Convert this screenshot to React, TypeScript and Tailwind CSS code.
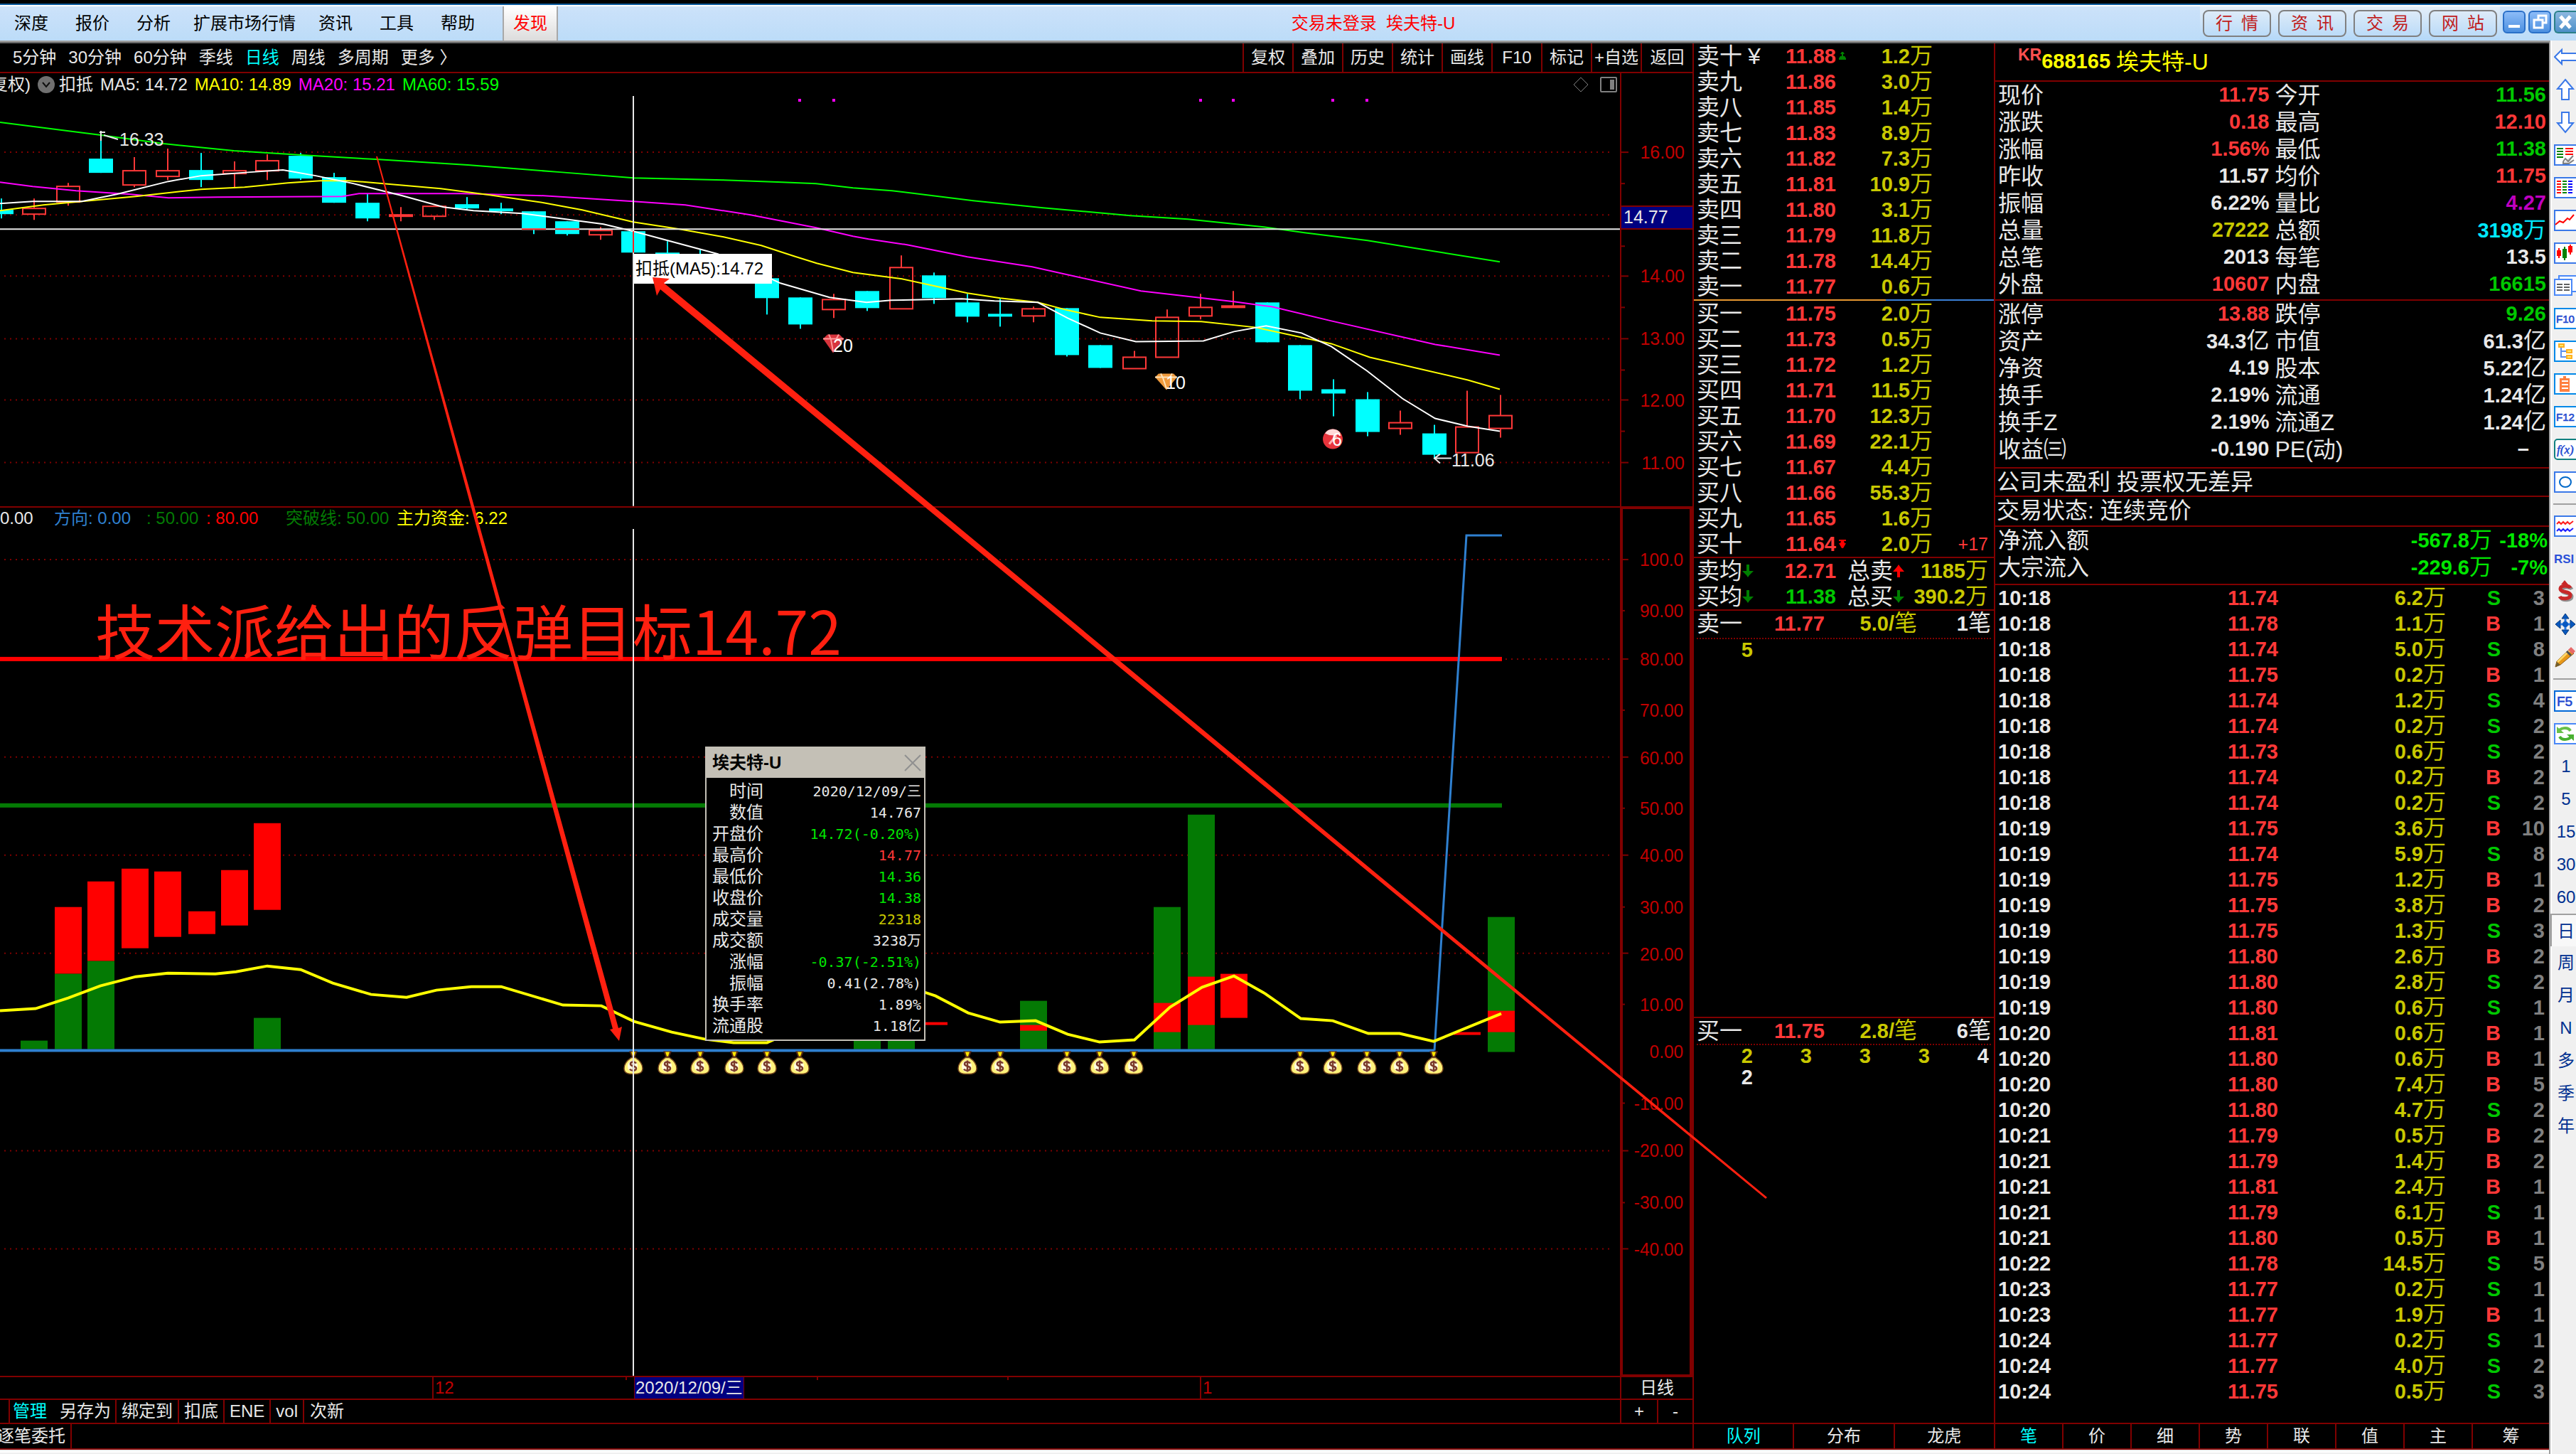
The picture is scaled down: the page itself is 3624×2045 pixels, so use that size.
import type { ReactNode } from 'react';

const WHITE = '#e8e8e8';
const DARK_RED = '#800000';

/* ---------- chart data ---------- */

// x, body top, body bottom, high, low, rising
type Candle = [number, number, number, number, number, boolean];
const candles: Candle[] = [
  [2, 295, 301, 279, 307, false],
  [48, 293, 301, 279, 309, true],
  [96, 262, 284, 257, 289, true],
  [142, 223, 243, 190, 243, false],
  [189, 240, 260, 221, 263, true],
  [236, 240, 248, 209, 253, true],
  [283, 239, 253, 215, 263, false],
  [330, 240, 244, 227, 263, true],
  [376, 226, 240, 217, 253, true],
  [423, 219, 251, 215, 253, false],
  [470, 249, 285, 243, 285, false],
  [517, 285, 307, 273, 311, false],
  [564, 302, 304, 291, 311, true],
  [611, 290, 304, 290, 309, true],
  [657, 287, 293, 277, 295, false],
  [705, 293, 297, 285, 301, false],
  [751, 297, 323, 297, 329, false],
  [798, 311, 329, 311, 331, false],
  [845, 324, 330, 319, 337, true],
  [891, 325, 355, 325, 359, false],
  [939, 355, 385, 339, 390, false],
  [985, 362, 390, 350, 395, false],
  [1032, 370, 392, 362, 396, false],
  [1079, 391, 419, 391, 442, false],
  [1126, 418, 456, 418, 462, false],
  [1173, 421, 435, 413, 447, true],
  [1220, 409, 433, 409, 437, false],
  [1268, 376, 434, 359, 434, true],
  [1314, 387, 419, 383, 427, false],
  [1361, 425, 445, 413, 453, false],
  [1407, 441, 445, 420, 459, false],
  [1454, 434, 444, 431, 453, true],
  [1501, 433, 499, 433, 501, false],
  [1548, 485, 517, 485, 517, false],
  [1596, 502, 518, 493, 518, true],
  [1642, 446, 502, 435, 502, true],
  [1689, 432, 444, 413, 449, true],
  [1735, 430, 432, 409, 432, true],
  [1783, 425, 481, 425, 481, false],
  [1829, 485, 549, 485, 561, false],
  [1876, 547, 553, 533, 585, false],
  [1924, 561, 607, 551, 613, false],
  [1970, 594, 602, 577, 611, true],
  [2018, 609, 639, 597, 645, false],
  [2064, 600, 636, 549, 636, true],
  [2111, 584, 602, 555, 615, true],
];

const ma60 =
  '0,172 142,190 230,202 329,212 424,218 529,224 658,232 788,242 891,250 1018,253 1100,256 1148,258 1200,264 1255,268 1369,282 1467,292 1590,303 1671,308 1778,319 1835,327 1924,338 1998,350 2110,368';
const ma20 =
  '0,256 46,262 107,268 184,273 237,278 306,277 482,276 505,272 650,272 765,275 891,283 964,288 1056,302 1148,320 1200,332 1222,336 1276,344 1361,361 1452,375 1605,409 1736,424 1789,431 1873,451 2019,484 2110,499';
const ma10 =
  '0,296 61,288 115,283 191,276 283,266 344,263 405,257 451,254 490,254 551,259 620,265 689,274 765,285 819,295 891,312 956,322 1018,333 1071,345 1117,360 1149,370 1200,383 1269,392 1315,402 1361,412 1407,419 1460,425 1502,436 1548,446 1621,451 1690,452 1766,460 1873,483 1927,502 1996,518 2065,534 2110,547';
const ma5 =
  '0,286 46,283 115,283 164,273 237,255 283,247 352,242 398,239 444,247 497,258 566,275 624,291 666,296 735,300 796,308 849,315 891,325 1010,357 1098,398 1167,418 1219,425 1254,422 1353,420 1399,423 1460,425 1502,447 1548,468 1598,480 1693,479 1736,466 1781,458 1831,468 1873,487 1923,521 1973,560 2019,588 2065,599 2110,606';

const fund =
  '0,1421 50,1418 96,1403 141,1386 191,1373 236,1368 303,1369 332,1366 376,1358 423,1363 468,1382 522,1398 572,1402 614,1392 663,1387 705,1387 792,1413 846,1414 892,1436 945,1451 992,1461 1032,1466 1079,1466 1170,1425 1240,1396 1301,1395 1316,1400 1362,1424 1407,1437 1457,1435 1502,1454 1547,1465 1596,1462 1646,1416 1691,1388 1736,1372 1780,1397 1830,1432 1875,1435 1925,1453 1969,1453 2017,1464 2112,1425';

// x, top, bottom, colour
const bars: [number, number, number, string][] = [
  [29, 1463, 1475, 'g'],
  [77, 1275, 1369, 'r'],
  [77, 1369, 1475, 'g'],
  [123, 1239, 1351, 'r'],
  [123, 1351, 1475, 'g'],
  [171, 1221, 1333, 'r'],
  [217, 1225, 1317, 'r'],
  [265, 1281, 1313, 'r'],
  [311, 1223, 1301, 'r'],
  [357, 1157, 1279, 'r'],
  [357, 1431, 1475, 'g'],
  [1201, 1450, 1475, 'g'],
  [1249, 1450, 1475, 'g'],
  [1295, 1437, 1441, 'r'],
  [1435, 1407, 1475, 'g'],
  [1435, 1441, 1449, 'r'],
  [1623, 1275, 1475, 'g'],
  [1623, 1410, 1451, 'r'],
  [1671, 1145, 1475, 'g'],
  [1671, 1373, 1441, 'r'],
  [1717, 1369, 1431, 'r'],
  [2045, 1451, 1455, 'r'],
  [2093, 1289, 1479, 'g'],
  [2093, 1421, 1451, 'r'],
];

const bags = [891, 939, 985, 1033, 1079, 1125, 1361, 1407, 1501, 1547, 1595, 1829, 1875, 1923, 1969, 2017];

const upperGrid = [214, 302, 388, 476, 562, 650];
const upperLabels: [string, number][] = [
  ['16.00', 214],
  ['14.00', 388],
  ['13.00', 476],
  ['12.00', 562],
  ['11.00', 650],
];
const upperMinor = [258, 346, 432, 520, 606];
const lowerGrid = [786, 926, 1064, 1202, 1340, 1618, 1756];
const lowerLabels: [string, number][] = [
  ['100.0', 786],
  ['90.00', 858],
  ['80.00', 926],
  ['70.00', 998],
  ['60.00', 1065],
  ['50.00', 1136],
  ['40.00', 1202],
  ['30.00', 1275],
  ['20.00', 1341],
  ['10.00', 1412],
  ['0.00', 1478],
  ['-10.00', 1551],
  ['-20.00', 1618],
  ['-30.00', 1691],
  ['-40.00', 1757],
];

/* ---------- quote data ---------- */

const sells = [
  ['卖十', '11.88', '1.2'],
  ['卖九', '11.86', '3.0'],
  ['卖八', '11.85', '1.4'],
  ['卖七', '11.83', '8.9'],
  ['卖六', '11.82', '7.3'],
  ['卖五', '11.81', '10.9'],
  ['卖四', '11.80', '3.1'],
  ['卖三', '11.79', '11.8'],
  ['卖二', '11.78', '14.4'],
  ['卖一', '11.77', '0.6'],
];
const buys = [
  ['买一', '11.75', '2.0'],
  ['买二', '11.73', '0.5'],
  ['买三', '11.72', '1.2'],
  ['买四', '11.71', '11.5'],
  ['买五', '11.70', '12.3'],
  ['买六', '11.69', '22.1'],
  ['买七', '11.67', '4.4'],
  ['买八', '11.66', '55.3'],
  ['买九', '11.65', '1.6'],
  ['买十', '11.64', '2.0'],
];

const R = 'text-[#ff3838]';
const G = 'text-[#00c800]';
const W = 'text-[#e8e8e8]';
const Y = 'text-[#c8c800]';

type Pair = [string, string, string];
const stats1: [Pair, Pair][] = [
  [['现价', '11.75', R], ['今开', '11.56', G]],
  [['涨跌', '0.18', R], ['最高', '12.10', R]],
  [['涨幅', '1.56%', R], ['最低', '11.38', G]],
  [['昨收', '11.57', W], ['均价', '11.75', R]],
  [['振幅', '6.22%', W], ['量比', '4.27', 'text-[#c000c0]']],
  [['总量', '27222', Y], ['总额', '3198万', 'text-[#00e8ff]']],
  [['总笔', '2013', W], ['每笔', '13.5', W]],
  [['外盘', '10607', R], ['内盘', '16615', G]],
];
const stats2: [Pair, Pair][] = [
  [['涨停', '13.88', R], ['跌停', '9.26', G]],
  [['资产', '34.3亿', W], ['市值', '61.3亿', W]],
  [['净资', '4.19', W], ['股本', '5.22亿', W]],
  [['换手', '2.19%', W], ['流通', '1.24亿', W]],
  [['换手Z', '2.19%', W], ['流通Z', '1.24亿', W]],
  [['收益㈢', '-0.190', W], ['PE(动)', '–\u00a0\u00a0\u00a0', W]],
];

const ticks: [string, string, string, 'S' | 'B', number][] = [
  ['10:18', '11.74', '6.2', 'S', 3],
  ['10:18', '11.78', '1.1', 'B', 1],
  ['10:18', '11.74', '5.0', 'S', 8],
  ['10:18', '11.75', '0.2', 'B', 1],
  ['10:18', '11.74', '1.2', 'S', 4],
  ['10:18', '11.74', '0.2', 'S', 2],
  ['10:18', '11.73', '0.6', 'S', 2],
  ['10:18', '11.74', '0.2', 'B', 2],
  ['10:18', '11.74', '0.2', 'S', 2],
  ['10:19', '11.75', '3.6', 'B', 10],
  ['10:19', '11.74', '5.9', 'S', 8],
  ['10:19', '11.75', '1.2', 'B', 1],
  ['10:19', '11.75', '3.8', 'B', 2],
  ['10:19', '11.75', '1.3', 'S', 3],
  ['10:19', '11.80', '2.6', 'B', 2],
  ['10:19', '11.80', '2.8', 'S', 2],
  ['10:19', '11.80', '0.6', 'S', 1],
  ['10:20', '11.81', '0.6', 'B', 1],
  ['10:20', '11.80', '0.6', 'B', 1],
  ['10:20', '11.80', '7.4', 'B', 5],
  ['10:20', '11.80', '4.7', 'S', 2],
  ['10:21', '11.79', '0.5', 'B', 2],
  ['10:21', '11.79', '1.4', 'B', 2],
  ['10:21', '11.81', '2.4', 'B', 1],
  ['10:21', '11.79', '6.1', 'S', 1],
  ['10:21', '11.80', '0.5', 'B', 1],
  ['10:22', '11.78', '14.5', 'S', 5],
  ['10:23', '11.77', '0.2', 'S', 1],
  ['10:23', '11.77', '1.9', 'B', 1],
  ['10:24', '11.77', '0.2', 'S', 1],
  ['10:24', '11.77', '4.0', 'S', 2],
  ['10:24', '11.75', '0.5', 'S', 3],
];

const popupRows: [string, string, string][] = [
  ['时间', '2020/12/09/三', W],
  ['数值', '14.767', W],
  ['开盘价', '14.72(-0.20%)', 'text-[#00e600]'],
  ['最高价', '14.77', R],
  ['最低价', '14.36', 'text-[#00e600]'],
  ['收盘价', '14.38', 'text-[#00e600]'],
  ['成交量', '22318', Y],
  ['成交额', '3238万', W],
  ['涨幅', '-0.37(-2.51%)', 'text-[#00e600]'],
  ['振幅', '0.41(2.78%)', W],
  ['换手率', '1.89%', W],
  ['流通股', '1.18亿', W],
];

/* ---------- small pieces ---------- */

// Figures are bold, the Chinese unit after them is larger and regular.
function Num({ v }: { v: string }) {
  const m = v.match(/^(.*?)([万亿笔]?)$/)!;
  return (
    <>
      <span className="text-[29px] font-bold leading-none">{m[1]}</span>
      {m[2] && <span className="text-[32px] font-normal leading-none">{m[2]}</span>}
    </>
  );
}

function Arrow({ up }: { up?: boolean }) {
  return (
    <svg viewBox="0 0 16 18" className="h-[18px] w-4 shrink-0" aria-hidden="true">
      {up ? (
        <path d="M6 18V10H0L6 3L8 0L10 3L16 10H10V18Z" fill="#ff0000" />
      ) : (
        <path d="M6 0V9H0L6 15L8 18L10 15L16 9H10V0Z" fill="#008000" />
      )}
    </svg>
  );
}

function MoneyBag({ x }: { x: number }) {
  return (
    <g transform={`translate(${x - 14} 1478)`}>
      <path d="M8 0H20L16 9H12Z" fill="#5a2a14" />
      <path d="M11 1H17L15 7H13Z" fill="#ffe800" />
      <path d="M11 9H17C23 13 27 18 27 24C27 30 23 32 14 32C5 32 1 30 1 24C1 18 5 13 11 9Z" fill="#fff27a" stroke="#7a4a20" strokeWidth="1.5" />
      <ellipse cx="13" cy="21" rx="7" ry="8" fill="#fffbe0" />
      <path d="M18 17C16 14 10 14 10 18C10 22 18 20 18 24C18 28 11 28 9 25M14 13V29" fill="none" stroke="#7a3a2a" strokeWidth="2.5" />
    </g>
  );
}

function UpperChart() {
  return (
    <svg viewBox="0 135 2279 576" preserveAspectRatio="none" className="min-h-0 w-full flex-1" role="img" aria-label="日线K线图">
      {upperGrid.map((y) => (
        <line key={y} x1="6" x2="2270" y1={y} y2={y} stroke={DARK_RED} strokeWidth="2" strokeDasharray="2 6" />
      ))}
      {[1125, 1173, 1689, 1735, 1875, 1923].map((x) => (
        <rect key={x} x={x - 2} y="139" width="4" height="4" fill="#ff00ff" />
      ))}
      {candles.map(([x, t, b, h, l, up]) =>
        up ? (
          <g key={x} stroke="#ff3838" strokeWidth="2">
            <path d={`M${x} ${h}V${t}M${x} ${b}V${l}`} />
            <rect x={x - 16} y={t} width="32" height={b - t} fill="none" />
          </g>
        ) : (
          <g key={x} fill="#00ffff">
            <rect x={x - 1} y={h} width="2" height={l - h} />
            <rect x={x - 17} y={t} width="34" height={b - t} />
          </g>
        ),
      )}
      <g fill="none" strokeWidth="2">
        <polyline points={ma60} stroke="#00ff00" />
        <polyline points={ma20} stroke="#ff00ff" />
        <polyline points={ma10} stroke="#ffff00" />
        <polyline points={ma5} stroke="#ffffff" />
        <path d="M142 198V184M140 186H148M146 190L166 196" stroke={WHITE} />
        <path d="M2018 644H2042M2026 638L2018 644L2026 651" stroke={WHITE} />
      </g>
      <g fill={WHITE} fontSize="25" fontFamily="Liberation Sans, sans-serif">
        <text x="168" y="205">16.33</text>
        <text x="2042" y="655">11.06</text>
        <g>
          <path d="M1158 476L1164 470H1181L1187 476L1172 496Z" fill="#d8343c" />
          <path d="M1158 476H1187M1166 470L1169 477L1172 494M1180 470L1176 477" stroke="#ff9a9a" strokeWidth="2" fill="none" />
          <text x="1172" y="495" fill="#ffffff">20</text>
        </g>
        <g>
          <path d="M1625 530L1630 525H1651L1656 530L1641 548Z" fill="#f09a3c" />
          <path d="M1625 530H1656M1633 525L1636 531L1641 546M1649 525L1645 531" stroke="#ffe2b8" strokeWidth="2" fill="none" />
          <text x="1640" y="547" fill="#ffffff">10</text>
        </g>
        <g>
          <circle cx="1875" cy="617" r="14" fill="#e8343c" />
          <path d="M1864 609A13 13 0 0 1 1886 609A16 10 0 0 1 1864 609Z" fill="#ffd8d8" />
          <path d="M1870 624L1880 612" stroke="#ffb0b0" strokeWidth="3" />
          <text x="1874" y="626" fill="#ffffff">6</text>
        </g>
      </g>
      <path d="M891 135V711M0 322H2279" stroke={WHITE} strokeWidth="2" fill="none" />
      <path d="M734 322H768M781 322H815M891 325V355" stroke="#ff2020" strokeWidth="2" fill="none" />
    </svg>
  );
}

function LowerChart() {
  return (
    <svg viewBox="0 743 2279 1192" preserveAspectRatio="none" className="min-h-0 w-full flex-1" role="img" aria-label="主力资金指标图">
      {lowerGrid.map((y) => (
        <line key={y} x1="6" x2="2270" y1={y} y2={y} stroke={DARK_RED} strokeWidth="2" strokeDasharray="2 6" />
      ))}
      <rect x="0" y="923" width="2113" height="6" fill="#ff0000" />
      <rect x="0" y="1129" width="2113" height="6" fill="#047a04" />
      {bars.map(([x, t, b, c], i) => (
        <rect key={i} x={x} y={t} width="38" height={b - t} fill={c === 'r' ? '#ff0000' : '#047a04'} />
      ))}
      <path d="M0 1477H2018" stroke="#2f80d0" strokeWidth="4" />
      <path d="M2018 1477L2063 752H2113" fill="none" stroke="#2f80d0" strokeWidth="3" />
      <polyline points={fund} fill="none" stroke="#ffff00" strokeWidth="4" />
      {bags.map((x) => (
        <MoneyBag key={x} x={x} />
      ))}
      <path d="M891 743V1935" stroke={WHITE} strokeWidth="2" />
    </svg>
  );
}

function Axis({ box, labels, ticksAt, minor }: { box: string; labels: [string, number][]; ticksAt: number[]; minor: number[] }) {
  return (
    <svg viewBox={box} preserveAspectRatio="none" className="block h-full w-full">
      {ticksAt.map((y) => (
        <path key={y} d={`M2281 ${y}h10`} stroke={DARK_RED} strokeWidth="2" />
      ))}
      {minor.map((y) => (
        <path key={y} d={`M2281 ${y}h5`} stroke={DARK_RED} strokeWidth="2" />
      ))}
      {labels.map(([t, y]) => (
        <text key={t} x="2370" y={y + 9} textAnchor="end" fontSize="25" fontFamily="Liberation Sans, sans-serif" fill="#c00000">
          {t}
        </text>
      ))}
    </svg>
  );
}

function BookRow({ row, mark, extra }: { row: string[]; mark?: 'top' | 'bottom'; extra?: ReactNode }) {
  return (
    <tr className="h-9">
      <td className="w-[116px] whitespace-nowrap pl-1 text-[32px]">
        {row[0]}
        {mark === 'top' && <span className="pl-2">¥</span>}
      </td>
      <td className={`w-[84px] text-right ${R}`}>
        <Num v={row[1]} />
      </td>
      <td className="w-5 pl-1">
        {mark === 'top' && (
          <svg viewBox="0 0 10 12" className="block h-3 w-[10px]" aria-hidden="true">
            <path d="M4 0H6L8 3H6V6H8L10 9V11H0V9L2 6H4V3H2Z" fill="#008000" />
          </svg>
        )}
        {mark === 'bottom' && (
          <svg viewBox="0 0 10 12" className="block h-3 w-[10px]" aria-hidden="true">
            <path d="M0 0H10V2H7L8 5H10L6 12H4L0 5H2L3 2H0Z" fill="#ff0000" />
          </svg>
        )}
      </td>
      <td className={`w-[116px] text-right ${Y}`}>
        <Num v={`${row[2]}万`} />
      </td>
      <td className={`pr-2 text-right text-[25px] ${R}`}>{extra}</td>
    </tr>
  );
}

function StatBlock({ rows }: { rows: [Pair, Pair][] }) {
  return (
    <dl className="grid grid-cols-2">
      {rows.flat().map(([label, value, color]) => (
        <div key={label} className="flex h-[38px] items-center justify-between px-1">
          <dt className="text-[32px]">{label}</dt>
          <dd className={color}>
            <Num v={value} />
          </dd>
        </div>
      ))}
    </dl>
  );
}

function Level({ name, price, each, count }: { name: string; price: string; each: string; count: string }) {
  return (
    <div className="flex h-9 shrink-0 items-center px-1">
      <span className="w-[104px] text-[32px]">{name}</span>
      <span className={`w-[76px] text-right ${R}`}>
        <Num v={price} />
      </span>
      <span className={`w-[130px] text-right ${Y}`}>
        <Num v={each} />
      </span>
      <span className="flex-1 text-right">
        <Num v={count} />
      </span>
    </div>
  );
}

/* ---------- right tool strip ---------- */

function Framed({ children, stroke = '#3a78e8' }: { children?: ReactNode; stroke?: string }) {
  return (
    <>
      <rect x="1" y="2" width="34" height="28" fill="#ffffff" stroke={stroke} strokeWidth="2" />
      {children}
    </>
  );
}

function Label({ children, color = '#2048d0' }: { children: string; color?: string }) {
  return (
    <text x="3" y="22" fontSize="15" fontFamily="Liberation Sans, sans-serif" fill={color} stroke={color} strokeWidth="0.6">
      {children}
    </text>
  );
}

const tools: [string, ReactNode][] = [
  ['后退', <path d="M1 16L11 6V11H34V21H11V26Z" fill="#fff" stroke="#3a78e8" strokeWidth="2" />],
  ['上移', <path d="M16 2L27 15H21V30H11V15H5Z" fill="#fff" stroke="#3a78e8" strokeWidth="2" />],
  ['下移', <path d="M16 30L27 17H21V2H11V17H5Z" fill="#fff" stroke="#3a78e8" strokeWidth="2" />],
  [
    '报价列表',
    <Framed>
      <path d="M4 7H13M4 11H13M4 15H13M4 19H13" stroke="#008000" strokeWidth="2" />
      <path d="M16 7H27M16 11H27M16 15H27" stroke="#ff0000" strokeWidth="2" />
      <path d="M13 25L16 21L20 25L27 17M13 25V28H21L28 23" stroke="#808080" strokeWidth="2" fill="#e0e0e0" />
    </Framed>,
  ],
  [
    '行情表',
    <Framed>
      {[7, 11, 15, 19, 23].map((y) => (
        <g key={y} strokeWidth="2">
          <path d={`M4 ${y}h6`} stroke="#ff0000" />
          <path d={`M12 ${y}h6`} stroke="#008000" />
          <path d={`M20 ${y}h6`} stroke="#0000ff" />
        </g>
      ))}
    </Framed>,
  ],
  ['分时图', <Framed><path d="M2 22L8 17L13 19L19 13L22 15L28 8" fill="none" stroke="#ff0000" strokeWidth="2" /></Framed>],
  [
    'K线图',
    <Framed>
      <path d="M4 12h6v8h-6zM6 9h2v14h-2zM20 6h6v9h-6zM22 4h2v14h-2z" fill="#ff0000" />
      <path d="M12 10h6v13h-6zM14 7h2v19h-2z" fill="#008000" />
    </Framed>,
  ],
  [
    '资料',
    <>
      <path d="M7 8V2H34V24H26" fill="#fff" stroke="#4a88f8" strokeWidth="2" />
      <rect x="1" y="7" width="24" height="22" fill="#fff" stroke="#4a88f8" strokeWidth="2" />
      <path d="M4 14H12M14 14H22M4 18H12M14 18H22M4 22H12M14 22H22" stroke="#606060" strokeWidth="2" />
    </>,
  ],
  ['F10', <Framed stroke="#0088e8"><Label>F10</Label></Framed>],
  [
    '板块树',
    <Framed stroke="#0088e8">
      <path d="M10 10V24H17M10 16H17" fill="none" stroke="#5a90f0" strokeWidth="2" />
      <rect x="6" y="5" width="9" height="6" fill="#ffb020" />
      <rect x="17" y="13" width="9" height="6" fill="#ffb020" />
      <rect x="17" y="21" width="9" height="6" fill="#ffb020" />
      <path d="M8 8H13M19 16H24M19 24H24" stroke="#ffe868" strokeWidth="2" />
    </Framed>,
  ],
  [
    '自选',
    <Framed stroke="#0088e8">
      <path d="M8 8H13V5H17V8H22V27H8Z" fill="#ff8040" />
      <path d="M11 12H20M11 17H20M11 22H20" stroke="#fff" strokeWidth="2" />
    </Framed>,
  ],
  ['F12', <Framed stroke="#0088e8"><Label>F12</Label></Framed>],
  [
    '公式',
    <>
      <rect x="1" y="2" width="34" height="28" rx="4" fill="#fff" stroke="#108080" strokeWidth="2" />
      <text x="4" y="22" fontSize="17" fontStyle="italic" fontFamily="Liberation Serif, serif" fill="#2048d0" stroke="#2048d0" strokeWidth="0.5">f(x)</text>
    </>,
  ],
  ['圈', <Framed><ellipse cx="16" cy="16" rx="8" ry="7" fill="none" stroke="#0068c8" strokeWidth="2" /></Framed>],
];

const tools2: [string, ReactNode][] = [
  [
    '多指标',
    <Framed>
      <path d="M4 13L7 10L10 13L13 10L16 13L19 10L22 13L27 9" fill="none" stroke="#ff2020" strokeWidth="2" />
      <path d="M4 23L7 20L10 23L13 20L16 23L19 20L22 23L27 19" fill="none" stroke="#2020ff" strokeWidth="2" />
    </Framed>,
  ],
  ['RSI', <text x="0" y="22" fontSize="17" fontWeight="700" fontFamily="Liberation Sans, sans-serif" fill="#2a50d8">RSI</text>],
  [
    '卖出',
    <>
      <path d="M25 13C23 9 11 9 11 14C11 20 25 17 25 23C25 29 12 29 10 25" fill="none" stroke="#909090" strokeWidth="5" />
      <path d="M23 11C21 7 9 7 9 12C9 18 23 15 23 21C23 27 10 27 8 23" fill="none" stroke="#c82828" strokeWidth="5" />
      <path d="M15 0L20 6H10Z" fill="#c82828" />
    </>,
  ],
  [
    '移动',
    <>
      <path d="M16 1L21 8H11ZM16 31L21 24H11ZM2 16L9 10V22ZM30 16L23 10V22Z" fill="#0858c0" stroke="#083878" strokeWidth="1" />
      <path d="M16 8V24M9 16H23" stroke="#2878e0" strokeWidth="3" />
      <circle cx="16" cy="16" r="4" fill="#0858c0" />
    </>,
  ],
  [
    '画笔',
    <>
      <path d="M2 30L4 22L22 5L28 11L9 27Z" fill="#e89818" stroke="#8a5a20" strokeWidth="1" />
      <path d="M5 23L22 7" stroke="#ffd868" strokeWidth="3" />
      <path d="M20 6L24 2L30 8L26 12Z" fill="#e86868" />
      <path d="M18 8L24 14" stroke="#505050" strokeWidth="3" />
      <path d="M2 30L4 23L9 27Z" fill="#706030" />
    </>,
  ],
];

const tools3: [string, ReactNode][] = [
  ['F5', <Framed stroke="#0068d8"><text x="4" y="23" fontSize="19" fontFamily="Liberation Sans, sans-serif" fill="#2048d0" stroke="#2048d0" strokeWidth="0.6">F5</text></Framed>],
  [
    '刷新',
    <Framed stroke="#4a88f8">
      <path d="M6 14C8 7 20 6 23 12" fill="none" stroke="#68c048" strokeWidth="4" />
      <path d="M4 6V15H14Z" fill="#68c048" />
      <path d="M25 18C23 25 11 26 8 20" fill="none" stroke="#48b030" strokeWidth="4" />
      <path d="M28 26V17H18Z" fill="#48b030" />
    </Framed>,
  ],
];

function ToolButtons({ items }: { items: [string, ReactNode][] }) {
  return (
    <>
      {items.map(([name, icon]) => (
        <button key={name} type="button" aria-label={name} className="flex h-[46px] w-full shrink-0 items-center pl-[5px]">
          <svg viewBox="0 0 36 32" className="h-8 w-9 shrink-0" aria-hidden="true">
            {icon}
          </svg>
        </button>
      ))}
    </>
  );
}

const periods = ['1', '5', '15', '30', '60', '日', '周', '月', 'N', '多', '季', '年'];

function ToolStrip() {
  return (
    <aside className="flex w-[38px] shrink-0 flex-col overflow-hidden border-l-2 border-[#a0a0a0] bg-[#f0f0f0] shadow-[inset_2px_0_0_#ffffff]">
      <ToolButtons items={tools} />
      <hr className="my-[7px] ml-1 h-0.5 shrink-0 border-0 bg-[#a0a0a0]" />
      <ToolButtons items={tools2} />
      <hr className="my-[7px] ml-1 h-0.5 shrink-0 border-0 bg-[#a0a0a0]" />
      <ToolButtons items={tools3} />
      {periods.map((p) => (
        <button
          key={p}
          type="button"
          className={`h-[46px] w-full shrink-0 text-center text-[24px] leading-[46px] text-[#003090] ${p === '日' ? 'border-l-2 border-t-2 border-[#a0a0a0] bg-[#f8f8f8] pl-1.5 leading-[44px]' : 'pl-2'}`}
        >
          {p}
        </button>
      ))}
    </aside>
  );
}

/* ---------- title bar ---------- */

function MenuBar() {
  return (
    <header className="shrink-0 border-t-[5px] border-black">
      <div className="h-0.5 bg-[#0a5a9e]" />
      <div className="h-0.5 bg-white" />
      <div className="flex h-12 items-stretch bg-linear-to-b from-[#cce2fa] to-[#bcdcf8] text-[24px]">
        <nav className="flex items-stretch pl-px text-black">
          {['深度', '报价', '分析'].map((t) => (
            <button key={t} type="button" className="px-[19px]">
              {t}
            </button>
          ))}
          <button type="button" className="px-[13px]">扩展市场行情</button>
          {['资讯', '工具', '帮助'].map((t) => (
            <button key={t} type="button" className="px-[19px]">
              {t}
            </button>
          ))}
          <button type="button" className="ml-5 border-x-2 border-[#a8a8a8] bg-linear-to-b from-white to-[#dcdcdc] px-[13px] text-[#ff0000]">
            发现
          </button>
        </nav>
        <h1 className="flex flex-1 items-center justify-center pr-4 text-[#ff0000]">交易未登录&nbsp; 埃夫特-U</h1>
        <div className="flex items-center gap-[10px] bg-linear-to-b from-[#e4eef8] to-[#b4d8f8] px-1">
          {['行 情', '资 讯', '交 易', '网 站'].map((t) => (
            <button
              key={t}
              type="button"
              className="h-[38px] w-24 rounded-lg border-2 border-[#808080] text-[24px] leading-[34px] text-[#c02020]"
            >
              <span className="flex justify-center gap-3">
                {t.split(' ').map((c) => (
                  <span key={c}>{c}</span>
                ))}
              </span>
            </button>
          ))}
        </div>
        <div className="flex gap-1 overflow-hidden pl-1 pt-1.5">
          <button type="button" aria-label="最小化" className="h-8 w-8 rounded-md border-2 border-[#2a70c8] bg-linear-to-b from-[#8cbcf8] to-[#4c90e0]">
            <svg viewBox="0 0 28 28" className="h-7 w-7"><rect x="6" y="18" width="16" height="4" fill="#fff" /></svg>
          </button>
          <button type="button" aria-label="还原" className="h-8 w-8 rounded-md border-2 border-[#2a70c8] bg-linear-to-b from-[#8cbcf8] to-[#4c90e0]">
            <svg viewBox="0 0 28 28" className="h-7 w-7" fill="none" stroke="#fff" strokeWidth="3"><path d="M12 10V5H23V15H18" /><rect x="6" y="11" width="12" height="11" /></svg>
          </button>
          <button type="button" aria-label="关闭" className="h-8 w-[31px] rounded-l-md border-2 border-r-0 border-[#2a8088] bg-linear-to-b from-[#8cb8e0] to-[#4c90c8]">
            <svg viewBox="0 0 28 28" className="h-7 w-7"><path d="M7 6L21 22M21 6L7 22" stroke="#fff" strokeWidth="5" /></svg>
          </button>
        </div>
      </div>
    </header>
  );
}

/* ---------- left charts ---------- */

function ChartToolbar() {
  return (
    <div className="flex h-[42px] shrink-0 items-stretch justify-between border-b-2 border-[#800000] text-[24px]">
      <nav className="flex items-center gap-[17px] pl-[18px]">
        {['5分钟', '30分钟', '60分钟', '季线', '日线', '周线', '多周期', '更多 〉'].map((t) => (
          <button key={t} type="button" className={t === '日线' ? 'text-[#00ffff]' : ''}>
            {t}
          </button>
        ))}
      </nav>
      <div className="flex items-stretch">
        {['复权', '叠加', '历史', '统计', '画线', 'F10', '标记', '+自选', '返回'].map((t) => (
          <button key={t} type="button" className="w-[70px] whitespace-nowrap border-l-2 border-[#800000] last:w-[73px]">
            {t}
          </button>
        ))}
      </div>
    </div>
  );
}

function DataPopup() {
  return (
    <section className="absolute left-[992px] top-[336px] w-[310px] border-2 border-[#c4c0b6] bg-black">
      <div className="flex h-[42px] items-center justify-between bg-[#c4c0b6] pl-2">
        <h2 className="text-[24px] font-bold text-black">埃夫特-U</h2>
        <button type="button" aria-label="关闭窗口" className="pr-1">
          <svg viewBox="0 0 24 24" className="h-6 w-6"><path d="M1 1L23 23M23 1L1 23" stroke="#909090" strokeWidth="2" /></svg>
        </button>
      </div>
      <table className="mb-1 mt-1 w-full border-collapse">
        <tbody>
          {popupRows.map(([k, v, c]) => (
            <tr key={k} className="h-[30px]">
              <th scope="row" className="w-20 p-0 text-right text-[24px] font-normal leading-[30px]">{k}</th>
              <td className={`p-0 pr-1 text-right font-['DejaVu_Sans_Mono','Noto_Sans_CJK_SC',monospace] text-[20px] leading-[30px] ${c}`}>{v}</td>
            </tr>
          ))}
        </tbody>
      </table>
    </section>
  );
}

function Charts() {
  return (
    <section className="flex min-w-0 flex-1 flex-col">
      <ChartToolbar />
      <div className="flex min-h-0 flex-[610] border-b-2 border-[#800000]">
        <div className="relative flex min-w-0 flex-1 flex-col overflow-hidden">
          <div className="flex h-8 shrink-0 items-center justify-between text-[24px]">
            <div className="-ml-[13px] flex items-center gap-[10px] whitespace-nowrap">
              <span>复权)</span>
              <button type="button" aria-label="指标菜单" className="flex h-6 w-6 items-center justify-center rounded-full bg-[#707070]">
                <svg viewBox="0 0 12 12" className="h-3 w-3"><path d="M1 3L6 9L11 3" stroke="#101010" strokeWidth="2" fill="none" /></svg>
              </button>
              <span className="-ml-1">扣抵</span>
              <span>MA5: 14.72</span>
              <span className="text-[#ffff00]">MA10: 14.89</span>
              <span className="text-[#ff00ff]">MA20: 15.21</span>
              <span className="text-[#00ff00]">MA60: 15.59</span>
            </div>
            <div className="flex gap-4 pr-1">
              <svg viewBox="0 0 22 22" className="h-[22px] w-[22px]" aria-hidden="true"><path d="M11 1L21 11L11 21L1 11Z" fill="none" stroke="#808080" strokeWidth="1" /></svg>
              <svg viewBox="0 0 24 22" className="h-[22px] w-6" aria-hidden="true"><rect x="1" y="1" width="22" height="20" rx="1" fill="none" stroke="#808080" strokeWidth="2" /><rect x="14" y="4" width="6" height="14" fill="#808080" /></svg>
            </div>
          </div>
          <UpperChart />
          <div className="absolute left-[892px] top-[254px] h-[42px] whitespace-nowrap bg-white pl-0.5 pr-3 text-[24px] leading-[42px] text-black">
            扣抵(MA5):14.72
          </div>
        </div>
        <div className="relative w-[102px] shrink-0 border-l-2 border-[#800000]">
          <Axis box="2281 103 100 608" labels={upperLabels} ticksAt={upperGrid} minor={upperMinor} />
          <div className="absolute inset-x-0 top-[186px] h-[34px] border-y-2 border-[#800000] bg-[#000080] pl-[3px] text-[25px] leading-7">14.77</div>
        </div>
      </div>
      <div className="flex min-h-0 flex-[1224] border-b-2 border-[#800000]">
        <div className="relative flex min-w-0 flex-1 flex-col">
          <div className="flex h-[30px] shrink-0 items-center whitespace-nowrap text-[24px]">
            <span className="w-[76px]">0.00</span>
            <span className="w-[130px] text-[#2f80d0]">方向: 0.00</span>
            <span className="w-[84px] text-[#047a04]">: 50.00</span>
            <span className="w-28 text-[#ff0000]">: 80.00</span>
            <span className="w-[156px] text-[#047a04]">突破线: 50.00</span>
            <span className="text-[#ffff00]">主力资金: 6.22</span>
          </div>
          <LowerChart />
          <DataPopup />
        </div>
        <div className="w-[102px] shrink-0 border-x-4 border-b-2 border-t-2 border-[#800000]">
          <Axis box="2283 715 96 1218" labels={lowerLabels} ticksAt={lowerGrid} minor={[858, 998, 1136, 1275, 1412, 1551, 1691]} />
        </div>
      </div>
      <div className="flex h-8 shrink-0 border-b-2 border-[#800000] text-[24px] leading-[30px]">
        <div className="relative flex flex-1">
          <span className="w-[608px]" />
          <span className="w-[284px] border-l-2 border-[#800000] pl-0.5 text-[#c00000]">12</span>
          <span className="w-[796px]">
            <span className="inline-block border-x border-[#800000] bg-[#000080] px-px">2020/12/09/三</span>
          </span>
          <span className="border-l-2 border-[#800000] pl-0.5 text-[#c00000]">1</span>
          {[880, 1149, 1417].map((x) => (
            <i key={x} className="absolute top-0 h-1 w-0.5 bg-[#800000]" style={{ left: x }} />
          ))}
        </div>
        <div className="w-[102px] border-l-2 border-[#800000] text-center">日线</div>
      </div>
      <div className="flex h-8 shrink-0 text-[24px] leading-8">
        <div className="flex flex-1">
          <span className="w-3.5 border-r-2 border-[#800000]" />
          <button type="button" className="px-1 text-[#00ffff]">管理</button>
          <button type="button" className="ml-2.5 border-r-2 border-[#800000] pl-1 pr-1.5">另存为</button>
          {['绑定到', '扣底', 'ENE', 'vol'].map((t) => (
            <button key={t} type="button" className="border-r-2 border-[#800000] px-[7px]">
              {t}
            </button>
          ))}
          <button type="button" className="px-2">次新</button>
        </div>
        <button type="button" className="w-[52px] border-l-2 border-[#800000]">+</button>
        <button type="button" className="w-[50px] border-l-2 border-[#800000]">-</button>
      </div>
    </section>
  );
}

/* ---------- order book ---------- */

function OrderBook() {
  return (
    <section className="flex w-[426px] shrink-0 flex-col border-x-2 border-[#800000]">
      <table className="w-full table-fixed border-collapse text-[29px] leading-9 [&_td]:py-0 [&_td]:pr-0">
        <tbody>
          {sells.map((r, i) => (
            <BookRow key={r[0]} row={r} mark={i === 0 ? 'top' : undefined} />
          ))}
        </tbody>
      </table>
      <div className="flex h-0.5 shrink-0">
        <div className="w-[64%] bg-[#e89830]" />
        <div className="flex-1 bg-[#3a80d8]" />
      </div>
      <table className="w-full table-fixed border-collapse text-[29px] leading-9 [&_td]:py-0">
        <tbody>
          {buys.map((r, i) => (
            <BookRow key={r[0]} row={r} mark={i === 9 ? 'bottom' : undefined} extra={i === 9 ? '+17' : undefined} />
          ))}
        </tbody>
      </table>
      <div className="shrink-0 border-y-2 border-[#800000]">
        {[
          ['卖均', '12.71', R, '总卖', '1185万'],
          ['买均', '11.38', G, '总买', '390.2万'],
        ].map(([a, p, c, b, v], i) => (
          <div key={a} className="flex h-9 items-center pl-1 pr-2 text-[29px] leading-9">
            <span className="text-[32px]">{a}</span>
            <Arrow />
            <span className={`w-[116px] text-right ${c}`}>
              <Num v={p} />
            </span>
            <span className="pl-4 text-[32px]">{b}</span>
            <Arrow up={i === 0} />
            <span className={`flex-1 text-right ${Y}`}>
              <Num v={v} />
            </span>
          </div>
        ))}
      </div>
      <div className="flex min-h-0 flex-[572] flex-col text-[29px] leading-9">
        <Level name="卖一" price="11.77" each="5.0/笔" count="1笔" />
        <div className="mx-1 mt-0.5 border-t-2 border-dotted border-[#800000]" />
        <div className={`grid w-[415px] grid-cols-5 text-right text-[29px] font-bold leading-[30px] ${Y}`}>
          <span>5</span>
        </div>
      </div>
      <div className="flex min-h-0 flex-[570] flex-col border-t-2 border-[#800000] text-[29px] leading-9">
        <Level name="买一" price="11.75" each="2.8/笔" count="6笔" />
        <div className="mx-1 border-t-2 border-dotted border-[#800000]" />
        <div className={`grid w-[415px] grid-cols-5 text-right text-[29px] font-bold leading-[30px] ${Y}`}>
          <span>2</span>
          <span>3</span>
          <span>3</span>
          <span>3</span>
          <span className={W}>4</span>
          <span className={W}>2</span>
        </div>
      </div>
    </section>
  );
}

/* ---------- quote panel ---------- */

function QuotePanel() {
  return (
    <section className="flex w-[779px] shrink-0 flex-col">
      <h2 className="flex h-[54px] shrink-0 items-center border-b-2 border-[#800000] pl-8 text-[#ffff00]">
        <sup className="top-[-10px] text-[23px] font-bold text-[#ff5050]">KR</sup>
        <span className="text-[29px] font-bold">688165</span>
        <span className="pl-2 text-[32px]">埃夫特-U</span>
      </h2>
      <div className="h-[308px] shrink-0 border-b-2 border-[#800000]">
        <StatBlock rows={stats1} />
      </div>
      <div className="h-[236px] shrink-0 border-b-2 border-[#800000]">
        <StatBlock rows={stats2} />
      </div>
      <p className="h-10 shrink-0 border-b-2 border-[#800000] pl-0.5 text-[32px] leading-[38px]">公司未盈利 投票权无差异</p>
      <p className="h-[42px] shrink-0 border-b-2 border-[#800000] pl-0.5 text-[32px] leading-[38px]">交易状态: 连续竞价</p>
      <div className="h-[82px] shrink-0 border-b-2 border-[#800000]">
        {[
          ['净流入额', '-567.8万', '-18%'],
          ['大宗流入', '-229.6万', '-7%'],
        ].map(([a, b, c]) => (
          <div key={a} className="flex h-[38px] items-center pl-1 pr-0.5 text-[29px] leading-[38px] text-[#00e600]">
            <span className="flex-1 text-[32px] text-[#e8e8e8]">{a}</span>
            <span className="whitespace-nowrap">
              <Num v={b} />
            </span>
            <span className="w-[78px] text-right">
              <Num v={c} />
            </span>
          </div>
        ))}
      </div>
      <table className="w-full table-fixed border-collapse text-[29px] leading-9 [&_td]:py-0">
        <colgroup>
          <col className="w-[200px]" />
          <col className="w-[198px]" />
          <col className="w-[236px]" />
          <col className="w-[77px]" />
          <col />
        </colgroup>
        <tbody>
          {ticks.map(([t, p, v, side, n], i) => (
            <tr key={i} className="h-9 font-bold">
              <td className="pl-1">{t}</td>
              <td className={`text-right ${R}`}>{p}</td>
              <td className={`text-right ${Y}`}>
                <Num v={`${v}万`} />
              </td>
              <td className={`text-right ${side === 'S' ? G : R}`}>{side}</td>
              <td className="pr-1.5 text-right text-[#808080]">{n}</td>
            </tr>
          ))}
        </tbody>
      </table>
    </section>
  );
}

function BottomTabs() {
  return (
    <div className="flex h-[38px] shrink-0 border-y-2 border-[#800000] text-[24px] leading-[34px]">
      <div className="flex-1 overflow-hidden">
        <button type="button" className="-ml-1 w-[105px] border-r-2 border-[#800000] text-left">逐笔委托</button>
      </div>
      <div className="grid w-[424px] grid-cols-3">
        {['队列', '分布', '龙虎'].map((t) => (
          <button key={t} type="button" className={`border-l-2 border-[#800000] ${t === '队列' ? 'text-[#00ffff]' : ''}`}>
            {t}
          </button>
        ))}
      </div>
      <div className="flex w-[781px]">
        {['笔', '价', '细', '势', '联', '值', '主', '筹'].map((t) => (
          <button key={t} type="button" className={`w-24 border-l-2 border-[#800000] last:flex-1 ${t === '笔' ? 'text-[#00ffff]' : ''}`}>
            {t}
          </button>
        ))}
      </div>
    </div>
  );
}

// Red pen marks drawn across the whole window.
function PenMarks() {
  return (
    <div className="pointer-events-none absolute inset-0">
      <svg viewBox="0 0 3624 2045" preserveAspectRatio="none" className="absolute inset-0 h-full w-full" fill="#ff2010">
        <path d="M529 220H531L870 1446L875 1444L871 1464L858 1448L862 1447Z" />
        <path d="M2486 1684L934 398L942 392L918 390L924 416L929 407L2484 1686Z" />
      </svg>
      <p className="absolute left-[134px] top-[825px] whitespace-nowrap font-['Noto_Sans_CJK_SC',sans-serif] text-[84px] leading-[120px] text-[#ff2010]">
        技术派给出的反弹目标14.72
      </p>
    </div>
  );
}

export default function App() {
  return (
    <div
      lang="zh-CN"
      className="relative flex min-h-screen flex-col overflow-hidden bg-black font-['Liberation_Sans','Noto_Sans_CJK_SC',sans-serif] text-[#e8e8e8]"
    >
      <MenuBar />
      <div className="flex flex-1">
        <main className="flex min-w-0 flex-1 flex-col">
          <div className="h-0.5 bg-[#a0a0a0]" />
          <div className="h-0.5 bg-[#686868]" />
          <div className="flex min-h-0 flex-1">
            <Charts />
            <OrderBook />
            <QuotePanel />
          </div>
          <BottomTabs />
          <div className="h-1.5 shrink-0 border-y-2 border-[#f0f0f0] bg-white" />
        </main>
        <ToolStrip />
      </div>
      <PenMarks />
    </div>
  );
}
